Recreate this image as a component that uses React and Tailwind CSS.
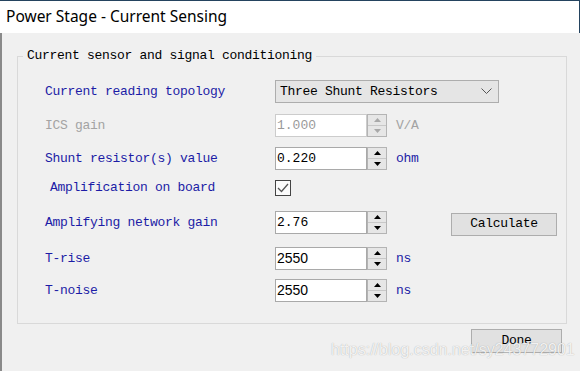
import React from "react";

const mono = { fontFamily: '"Liberation Mono", monospace' };

function Spinner({ disabled }) {
  const c = disabled ? "#a8a8a8" : "#000";
  return (
    <div className="w-[20px] h-full flex flex-col border border-[#b4b4b4] bg-[#e6e6e6]">
      <div className="flex-1 flex items-center justify-center border-b border-[#c8c8c8]">
        <svg width="7" height="4" viewBox="0 0 7 4">
          <path d="M0 4 L3.5 0 L7 4 Z" fill={c} />
        </svg>
      </div>
      <div className="flex-1 flex items-center justify-center">
        <svg width="7" height="4" viewBox="0 0 7 4">
          <path d="M0 0 L3.5 4 L7 0 Z" fill={c} />
        </svg>
      </div>
    </div>
  );
}

function SpinBox({ value, disabled, sans }) {
  return (
    <div className="flex h-[23px] w-[112px]">
      <div
        className={
          "flex-1 flex items-center pl-[1px] bg-white border " +
          (disabled ? "border-[#cccccc] text-[#9a9a9a]" : "border-[#a9a9a9] text-black")
        }
        style={sans ? { fontFamily: '"Liberation Sans", Arial, sans-serif', fontSize: "14px" } : { ...mono, fontSize: "13px" }}
      >
        {value}
      </div>
      <Spinner disabled={disabled} />
    </div>
  );
}

function Label({ children, gray, indent }) {
  return (
    <div
      className={
        "w-[230px] shrink-0 text-[13px] tracking-[-0.3px] " +
        (gray ? "text-[#a3a3a3] " : "text-[#1c1ca6] ") +
        (indent ? "pl-[5px]" : "")
      }
      style={mono}
    >
      {children}
    </div>
  );
}

function Unit({ children, gray }) {
  return (
    <div
      className={"ml-[9px] text-[13px] tracking-[-0.3px] " + (gray ? "text-[#a3a3a3]" : "text-[#1c1ca6]")}
      style={mono}
    >
      {children}
    </div>
  );
}

export default function App() {
  return (
    <div className="relative w-[580px] h-[371px] overflow-hidden bg-[#f0f0f0] flex flex-col">
      <div
        className="h-[33px] shrink-0 bg-white border-t border-r border-[#24435f] flex items-center pl-[6px] text-[15.5px] text-black"
        style={{ fontFamily: '"Noto Sans", "Open Sans", sans-serif' }}
      >
        Power Stage - Current Sensing
      </div>
      <div className="flex-1 border-l-2 border-[#8a8a8a] pl-[15px] pt-[15px]">
        <fieldset className="w-[550px] h-[276px] border border-[#d9d9d9]">
          <legend
            className="ml-[5px] px-[4px] text-[13px] leading-[16px] tracking-[-0.3px] text-black"
            style={mono}
          >
            Current sensor and signal conditioning
          </legend>
          <div className="pl-[27px] pt-[16px] flex flex-col">
            <div className="flex items-center h-[23px]">
              <Label>Current reading topology</Label>
              <div
                className="w-[224px] h-[23px] bg-[#e5e5e5] border border-[#adadad] flex items-center justify-between pl-[4px] pr-[6px] text-[13px] tracking-[-0.3px] text-black"
                style={mono}
              >
                <span>Three Shunt Resistors</span>
                <svg width="11" height="7" viewBox="0 0 11 7">
                  <path d="M0.5 0.5 L5.5 5.5 L10.5 0.5" fill="none" stroke="#555" strokeWidth="1" />
                </svg>
              </div>
            </div>
            <div className="flex items-center h-[23px] mt-[11px]">
              <Label gray>ICS gain</Label>
              <SpinBox value="1.000" disabled />
              <Unit gray>V/A</Unit>
            </div>
            <div className="flex items-center h-[23px] mt-[10px]">
              <Label>Shunt resistor(s) value</Label>
              <SpinBox value="0.220" />
              <Unit>ohm</Unit>
            </div>
            <div className="flex items-center h-[16px] mt-[10px]">
              <Label indent>Amplification on board</Label>
              <div className="w-[16px] h-[16px] border border-[#444] bg-[#fbfbfb] flex items-center justify-center">
                <svg width="12" height="10" viewBox="0 0 12 10">
                  <path d="M1 5 L4.5 8.5 L11 1" fill="none" stroke="#555" strokeWidth="1.3" />
                </svg>
              </div>
            </div>
            <div className="flex items-center h-[24px] mt-[15px]">
              <Label>Amplifying network gain</Label>
              <div className="self-start">
                <SpinBox value="2.76" />
              </div>
              <div
                className="ml-[64px] mt-[2px] w-[106px] h-[23px] bg-[#e1e1e1] border border-[#adadad] flex items-center justify-center text-[13px] tracking-[-0.3px] text-black"
                style={mono}
              >
                Calculate
              </div>
            </div>
            <div className="flex items-center h-[23px] mt-[12px]">
              <Label>T-rise</Label>
              <SpinBox value="2550" sans />
              <Unit>ns</Unit>
            </div>
            <div className="flex items-center h-[23px] mt-[9px]">
              <Label>T-noise</Label>
              <SpinBox value="2550" sans />
              <Unit>ns</Unit>
            </div>
          </div>
        </fieldset>
        <div className="flex mt-[5px] pl-[454px]">
          <div
            className="w-[91px] h-[24px] bg-[#e1e1e1] border border-[#adadad] flex items-center justify-center text-[13px] tracking-[-0.3px] text-black"
            style={mono}
          >
            Done
          </div>
        </div>
      </div>
      <div
        className="absolute left-[331px] top-[338px] text-[16px] text-white/85 [text-shadow:0_0_1px_rgba(0,0,0,0.35)]"
        style={{ fontFamily: '"Liberation Sans", Arial, sans-serif' }}
      >
        https://blog.csdn.net/sy243772901
      </div>
    </div>
  );
}
